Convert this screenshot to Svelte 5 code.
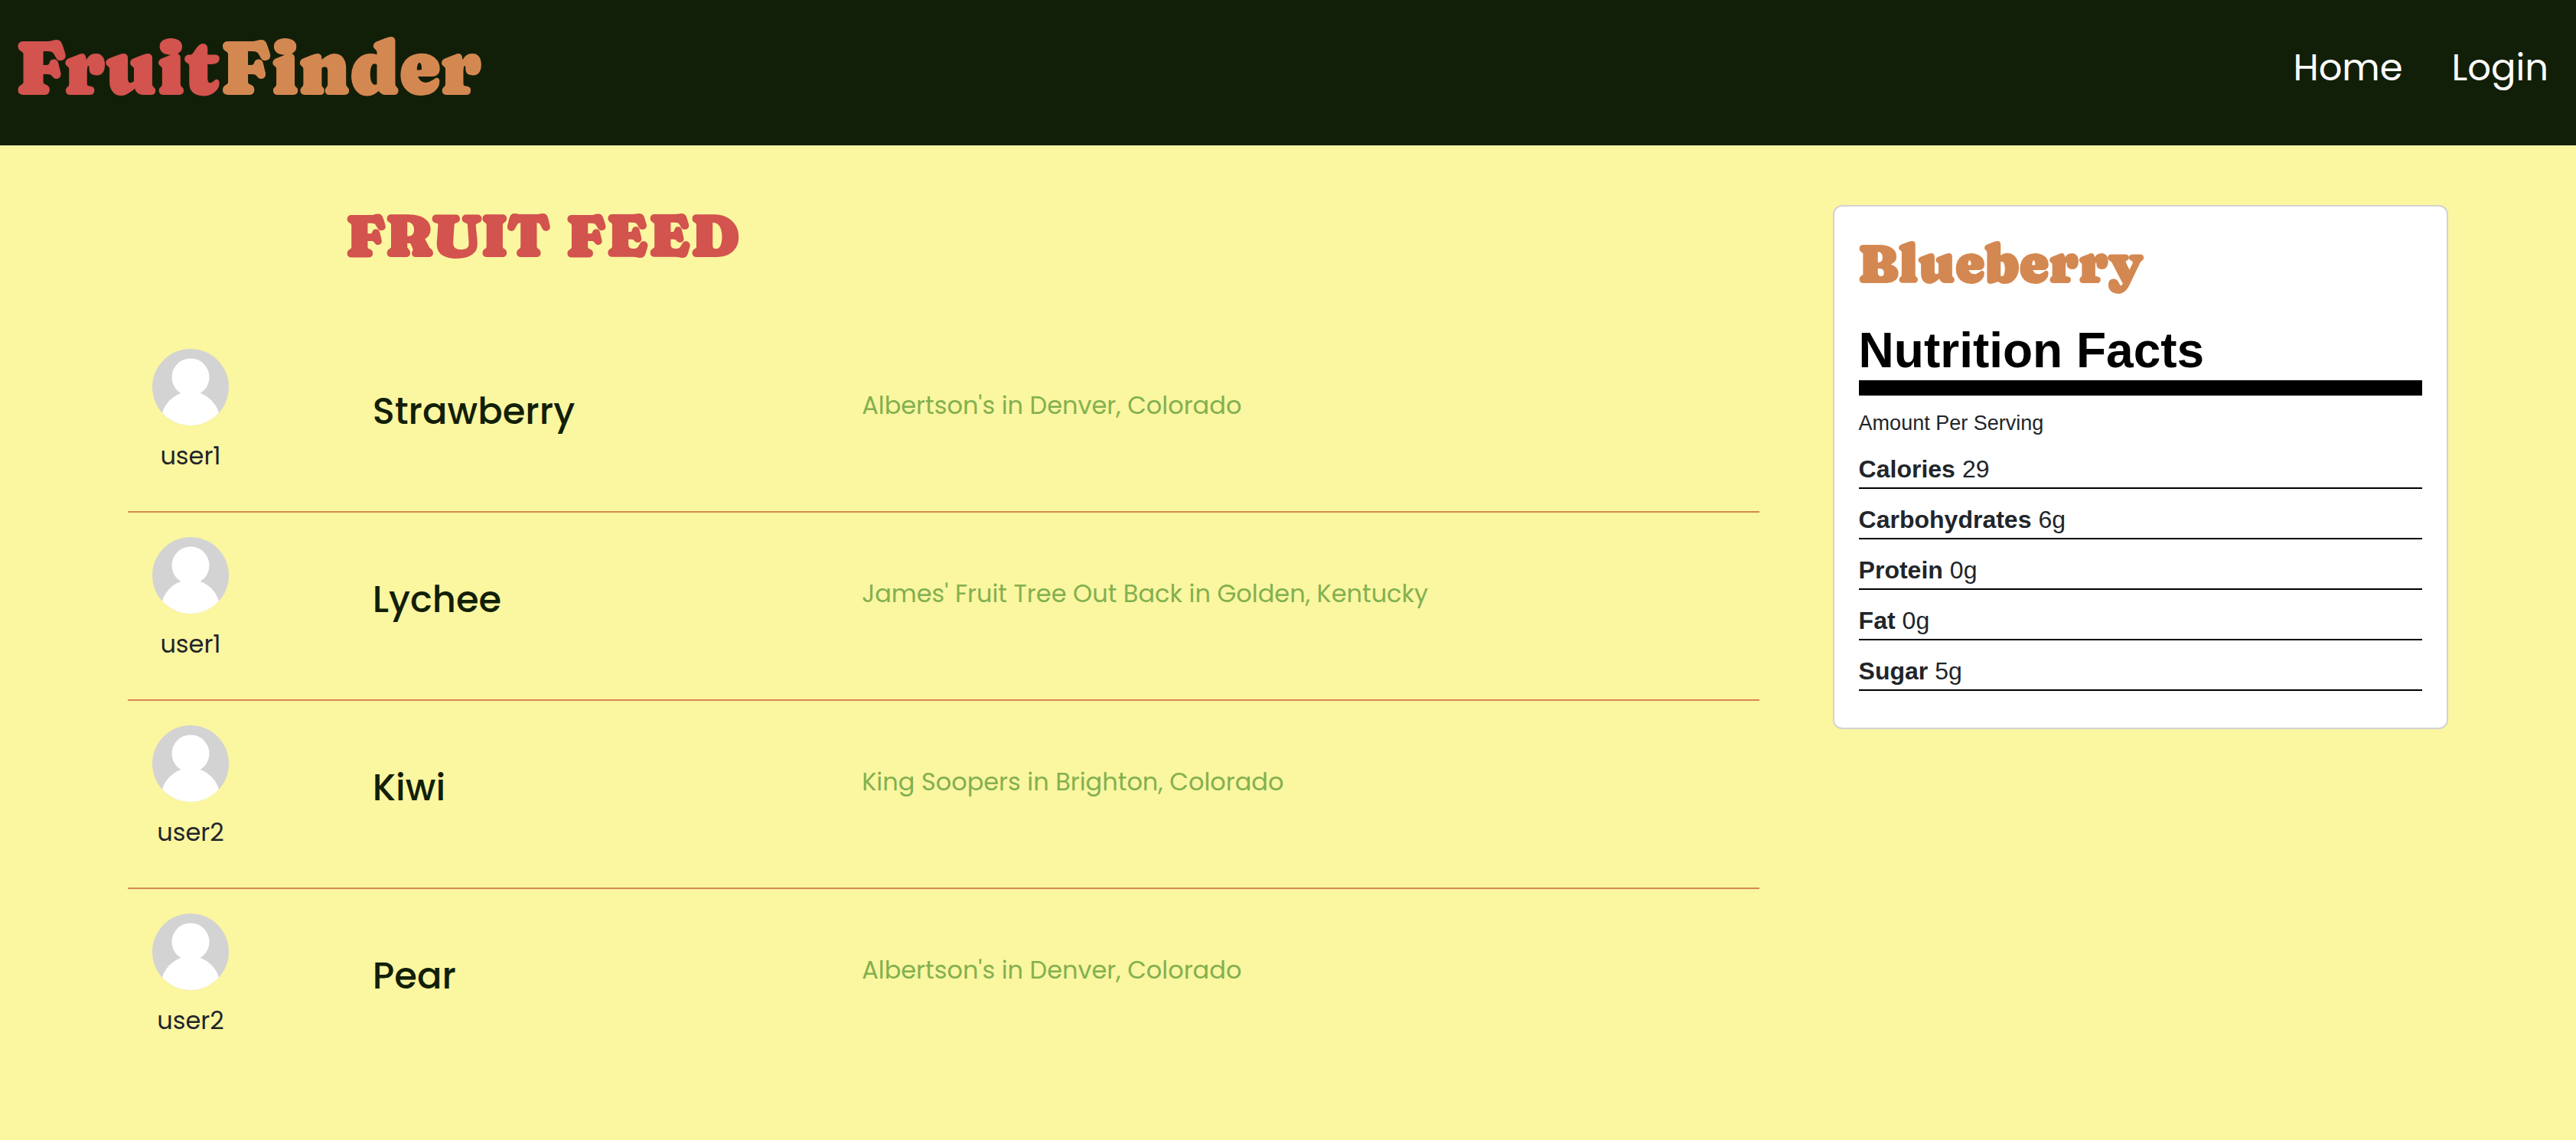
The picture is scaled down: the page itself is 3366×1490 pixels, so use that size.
<script>
  const posts = [
    { user: 'user1', fruit: 'Strawberry', place: "Albertson's in Denver, Colorado" },
    { user: 'user1', fruit: 'Lychee', place: "James' Fruit Tree Out Back in Golden, Kentucky" },
    { user: 'user2', fruit: 'Kiwi', place: 'King Soopers in Brighton, Colorado' },
    { user: 'user2', fruit: 'Pear', place: "Albertson's in Denver, Colorado" }
  ];

  const nutrition = [
    ['Calories', '29'],
    ['Carbohydrates', '6g'],
    ['Protein', '0g'],
    ['Fat', '0g'],
    ['Sugar', '5g']
  ];
</script>

<header class="topbar">
  <a class="logo display" href="/"><span class="red">Fruit</span><span class="orange">Finder</span></a>
  <nav class="links" aria-label="Main">
    <a href="/">Home</a>
    <a href="/login">Login</a>
  </nav>
</header>

<main class="page">
  <section class="feed">
    <h1 class="feed-title display red">FRUIT FEED</h1>
    <ul class="posts">
      {#each posts as post}
        <li class="post">
          <div class="author">
            <svg class="avatar" viewBox="0 0 100 100" aria-hidden="true">
              <defs>
                <clipPath id="avatar-round"><circle cx="50" cy="50" r="50" /></clipPath>
              </defs>
              <g clip-path="url(#avatar-round)">
                <rect width="100" height="100" fill="#d3d3d3" />
                <circle cx="50" cy="37" r="24.5" fill="#fff" />
                <circle cx="50" cy="94.5" r="38.7" fill="#fff" />
              </g>
            </svg>
            <span>{post.user}</span>
          </div>
          <h2 class="fruit">{post.fruit}</h2>
          <p class="place">{post.place}</p>
        </li>
      {/each}
    </ul>
  </section>

  <aside class="card">
    <h2 class="card-title display orange">Blueberry</h2>
    <h3 class="facts-title">Nutrition Facts</h3>
    <p class="serving">Amount Per Serving</p>
    <dl class="facts">
      {#each nutrition as [label, value]}
        <div class="fact">
          <dt>{label}</dt>
          <dd>{value}</dd>
        </div>
      {/each}
    </dl>
  </aside>
</main>

<style>
  :global(body) {
    margin: 0;
    background: #fbf6a0;
    color: #212529;
    font-family: Poppins, Inter, sans-serif;
    font-size: 32px;
  }

  h1, h2, h3, p, ul, dl, dd {
    margin: 0;
    padding: 0;
  }

  .display {
    font-family: Caprasimo, 'DejaVu Serif', serif;
    font-weight: 400;
    -webkit-text-stroke: 2px currentColor;
  }

  .red { color: #d3534e; }
  .orange { color: #d48851; }

  .topbar {
    display: flex;
    align-items: center;
    justify-content: space-between;
    padding: 29px 36px 41px 20px;
    background: #121f08;
  }

  .logo {
    font-size: 100px;
    line-height: 120px;
    text-decoration: none;
  }

  /* Each half is stroked in its own colour. */
  .logo span { -webkit-text-stroke: 2px currentColor; }

  .links {
    display: flex;
    gap: 64px;
  }

  .links a {
    color: #fff;
    font-size: 48px;
    line-height: 72px;
    text-decoration: none;
  }

  .page {
    display: grid;
    grid-template-columns: 53fr 20fr;
    align-items: start;
    gap: 96px;
    padding: 78px 167px;
  }

  .feed-title {
    margin-bottom: 76px;
    padding-left: 284px;
    font-size: 80px;
    line-height: 80px;
  }

  .posts { list-style: none; }

  .post {
    display: grid;
    grid-template-columns: 15% 30% 1fr;
    align-items: start;
    padding: 32px 0 48px;
    border-bottom: 2px solid #d48851;
  }

  .post:last-child { border-bottom: 0; }

  .author {
    display: flex;
    flex-direction: column;
    align-items: center;
    gap: 16px;
    justify-self: start;
    padding-left: 32px;
    line-height: 48px;
  }

  .avatar {
    width: 100px;
    height: 100px;
  }

  .fruit {
    padding-top: 50px;
    color: #121f08;
    font-size: 48px;
    font-weight: 500;
    line-height: 64px;
  }

  .place {
    padding-top: 48px;
    color: #82b04f;
    line-height: 52px;
  }

  .card {
    padding: 34px 32px 48px;
    border: 2px solid #d3d3d3;
    border-radius: 12px;
    background: #fff;
    font-family: 'Liberation Sans', Arial, sans-serif;
  }

  .card-title {
    margin-bottom: 35px;
    font-size: 72px;
    line-height: 80px;
  }

  .facts-title {
    border-bottom: 20px solid #000;
    color: #000;
    font-size: 64px;
    font-weight: 700;
    line-height: 78px;
  }

  .serving {
    margin-top: 16px;
    font-size: 27px;
    line-height: 40px;
  }

  .fact {
    display: flex;
    gap: 9px;
    margin-top: 16px;
    border-bottom: 2px solid #000;
    font-size: 32px;
    line-height: 48px;
  }

  dt { font-weight: 700; }
</style>
